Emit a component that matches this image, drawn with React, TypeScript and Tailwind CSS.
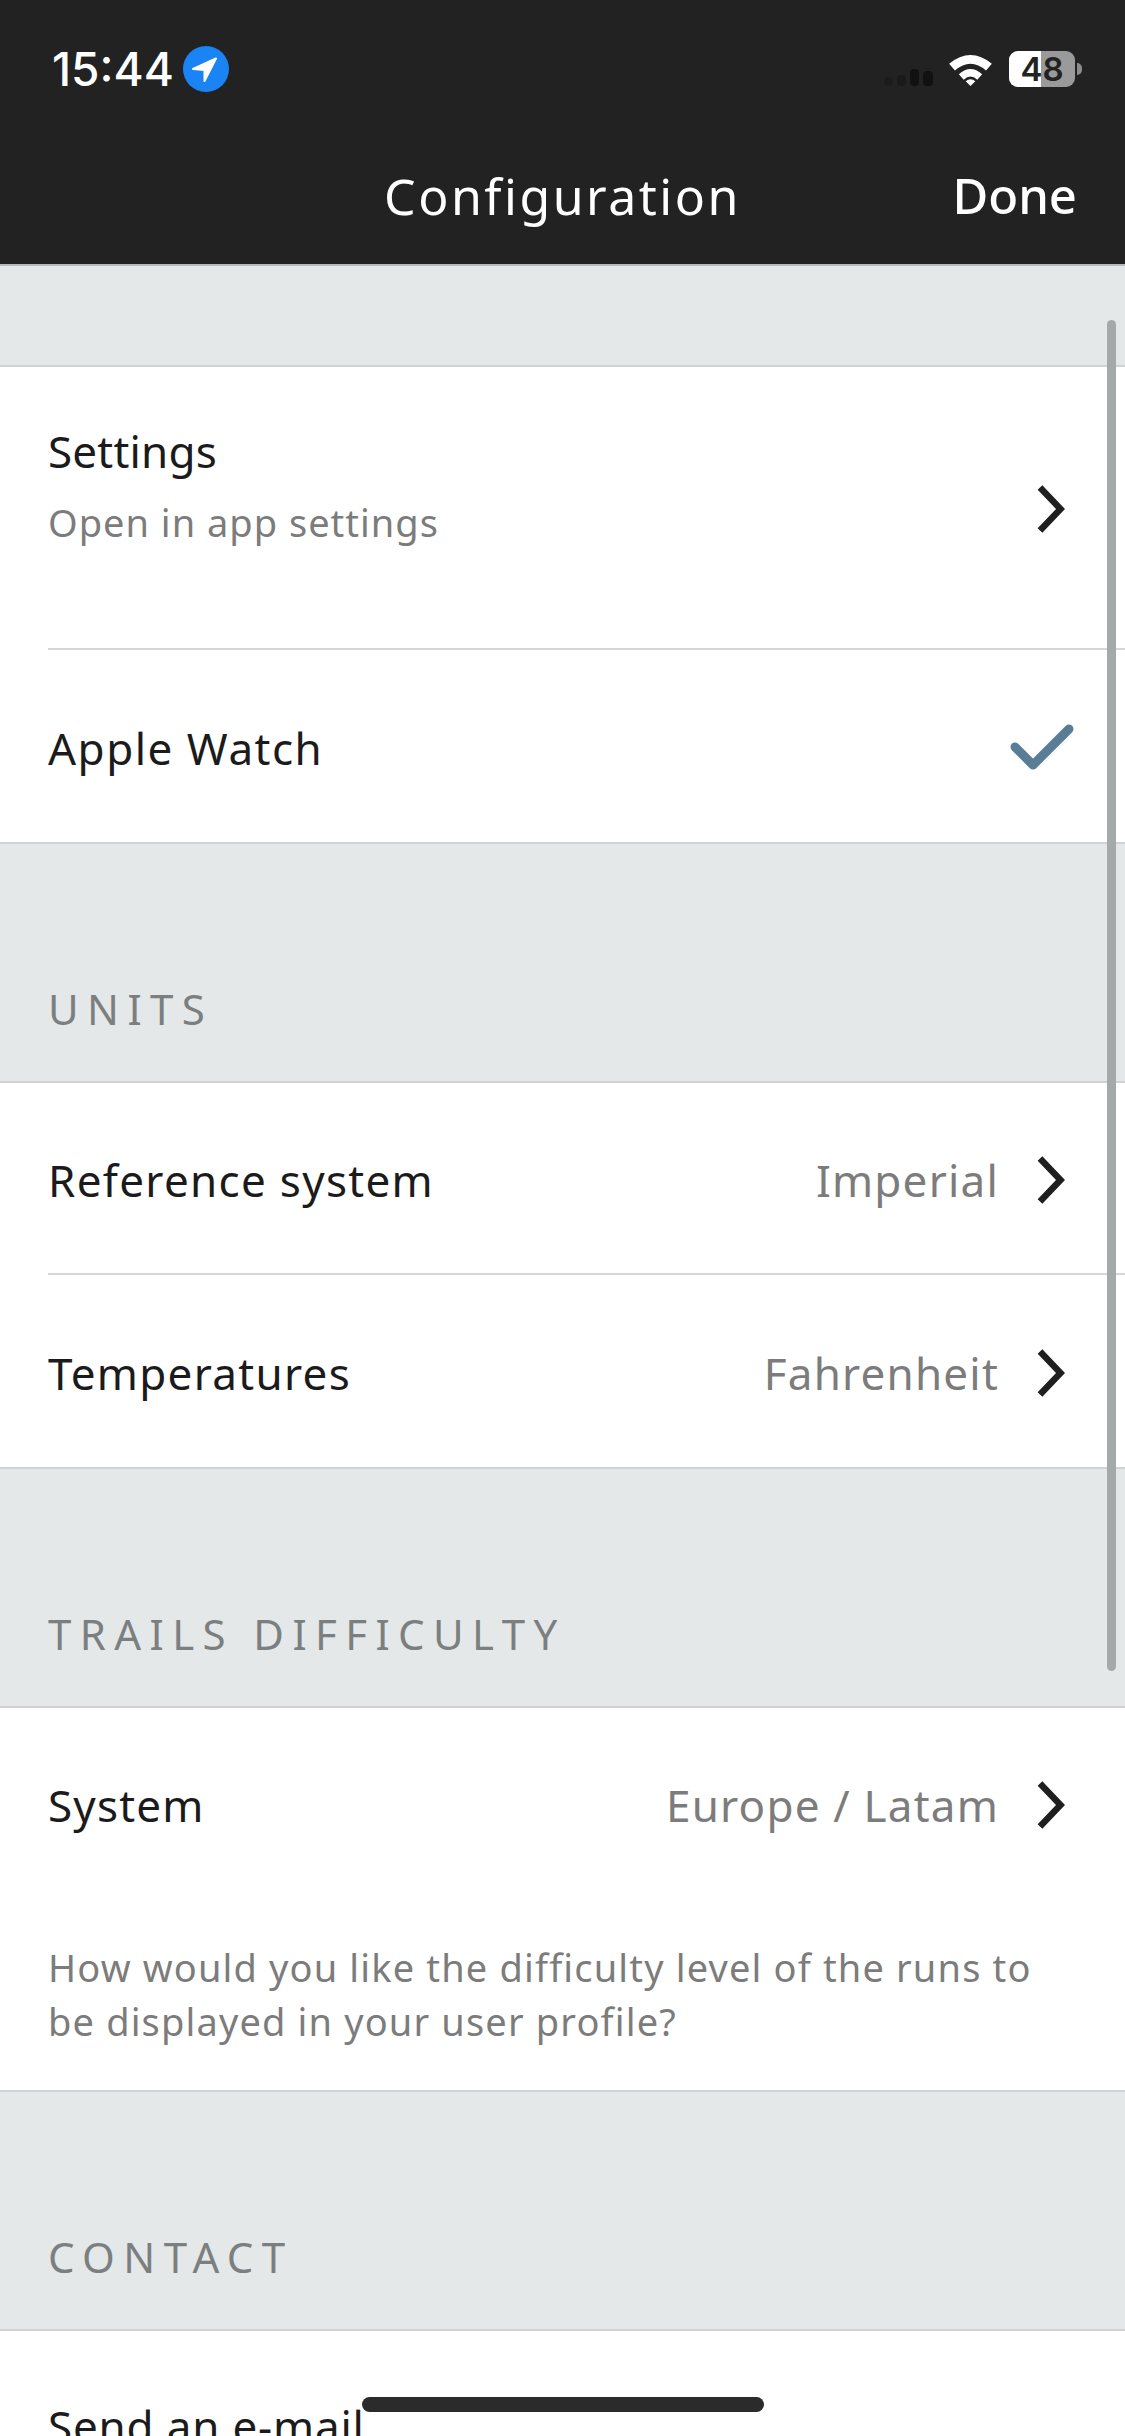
const Chevron = () => (
  <svg width="30" height="50" viewBox="0 0 30 50" fill="none" className="shrink-0">
    <path d="M5 3.5 L25.5 25 L5 46.5" stroke="#1f1f1f" strokeWidth="6.5" strokeLinejoin="miter" />
  </svg>
);

const Check = () => (
  <svg width="66" height="48" viewBox="0 0 66 48" fill="none" className="shrink-0">
    <path d="M6 25 L24 43 L60 7" stroke="#5a7d96" strokeWidth="9" strokeLinecap="round" strokeLinejoin="round" />
  </svg>
);

const SectionHeader = ({ title }: { title: string }) => (
  <div className="h-[241px] bg-[#e5e8e9] border-y-2 border-[#cfd2d3] flex items-end pl-12 pb-[44px]">
    <span className="text-[42px] leading-[56px] tracking-[8.4px] text-[#7b7f80]">{title}</span>
  </div>
);

const Row = ({ label, value, last }: { label: string; value: string; last?: boolean }) => (
  <div className="h-[192px] pl-12 flex">
    <div className={`flex-1 flex items-center justify-between pt-1 pr-[60px] ${last ? "" : "border-b-2 border-[#d6d6d6]"}`}>
      <span className="text-[44px] tracking-[1.3px] text-[#1b1b1b]">{label}</span>
      <div className="flex items-center gap-9">
        <span className="text-[44px] tracking-[1.2px] text-[#7c7c7c]">{value}</span>
        <Chevron />
      </div>
    </div>
  </div>
);

export default function App() {
  return (
    <div className="relative w-[1125px] h-[2436px] overflow-hidden bg-white font-['Noto_Sans',sans-serif]">
      <header className="h-[264px] bg-[#222222] pl-[52px] pr-[52px] pt-[38px]">
        <div className="flex items-center justify-between h-[62px] -mr-[9px]">
          <div className="flex items-center gap-[9px]">
            <span className="text-[46px] font-medium text-white font-['Inter',sans-serif]">15:44</span>
            <svg width="46" height="46" viewBox="0 0 46 46">
              <circle cx="23" cy="23" r="23" fill="#1a84f5" />
              <path d="M10 23 L33 12.5 L21.5 35 L21.5 24 Z" fill="#fff" stroke="#fff" strokeWidth="2" strokeLinejoin="round" />
            </svg>
          </div>
          <div className="flex items-center">
            <div className="flex items-end gap-[4px] mr-[15px] h-[33px]">
              <div className="w-[9px] h-[9px] rounded-full bg-[#1c1c1c]" />
              <div className="w-[9px] h-[11px] rounded-sm bg-[#1a1a1a]" />
              <div className="w-[9px] h-[17px] rounded-sm bg-[#111111]" />
              <div className="w-[10px] h-[15px] rounded-sm bg-[#111111]" />
            </div>
            <svg width="45" height="33" viewBox="0 0 46 34" className="mr-[16px]">
              <path d="M1 11 Q23 -7 45 11 L39 18 Q23 4 7 18 Z" fill="#fff" />
              <path d="M11 22 Q23 11 35 22 L30 27.5 Q23 21 16 27.5 Z" fill="#fff" />
              <path d="M18 29 Q23 25 28 29 L23 34 Z" fill="#fff" />
            </svg>
            <div className="relative w-[66px] h-[36px] rounded-[9px] bg-[#9a9a9a] flex">
              <div className="w-[32px] rounded-l-[9px] bg-white" />
              <span className="absolute inset-0 flex items-center justify-center text-[33px] leading-[36px] font-semibold text-[#222222] font-['Inter',sans-serif]">48</span>
            </div>
            <div className="w-[5px] h-[12px] ml-[2px] rounded-r-full bg-[#8c8c8c]" />
          </div>
        </div>
        <div className="relative flex items-center justify-center h-[60px] mt-[66px]">
          <span className="text-[50px] tracking-[2.5px] text-white">Configuration</span>
          <span className="absolute right-[-4px] text-[49px] font-medium text-white">Done</span>
        </div>
      </header>

      <div className="h-[103px] bg-[#e5e8e9] border-y-2 border-[#cfd2d3] border-t-[#b9b9b9]" />

      <div className="h-[283px] pl-12 flex">
        <div className="flex-1 flex justify-between border-b-2 border-[#d6d6d6] pr-[60px]">
          <div className="pt-[54px]">
            <div className="text-[44px] leading-[60px] tracking-[0.2px] text-[#1b1b1b]">Settings</div>
            <div className="text-[38px] leading-[52px] mt-[15px] tracking-[1px] text-[#7c7c7c]">Open in app settings</div>
          </div>
          <div className="pt-[117px]">
            <Chevron />
          </div>
        </div>
      </div>

      <div className="h-[192px] pl-12 pr-[50px] flex items-center justify-between">
        <span className="text-[44px] pt-[3px] tracking-[1.5px] text-[#1b1b1b]">Apple Watch</span>
        <Check />
      </div>

      <SectionHeader title="UNITS" />
      <Row label="Reference system" value="Imperial" />
      <Row label="Temperatures" value="Fahrenheit" last />
      <SectionHeader title="TRAILS DIFFICULTY" />

      <div className="h-[382px] pl-12 pr-[60px]">
        <div className="h-[192px] pt-[2px] flex items-center justify-between">
          <span className="text-[44px] tracking-[1.2px] text-[#1b1b1b]">System</span>
          <div className="flex items-center gap-9">
            <span className="text-[44px] tracking-[1.2px] text-[#7c7c7c]">Europe / Latam</span>
            <Chevron />
          </div>
        </div>
        <p className="text-[38px] leading-[54px] tracking-[1.15px] text-[#7c7c7c] pt-[40px]">
          How would you like the difficulty level of the runs to be displayed in your user profile?
        </p>
      </div>

      <SectionHeader title="CONTACT" />
      <div className="pl-12 pt-[62px]">
        <span className="text-[44px] tracking-[0.8px] text-[#1b1b1b]">Send an e-mail</span>
      </div>

      <div className="absolute right-[9px] top-[320px] w-[9px] h-[1351px] rounded-full bg-[#a6a9aa]" />
      <div className="absolute left-[362px] top-[2397px] w-[402px] h-[15px] rounded-full bg-[#2b2b2b]" />
    </div>
  );
}
